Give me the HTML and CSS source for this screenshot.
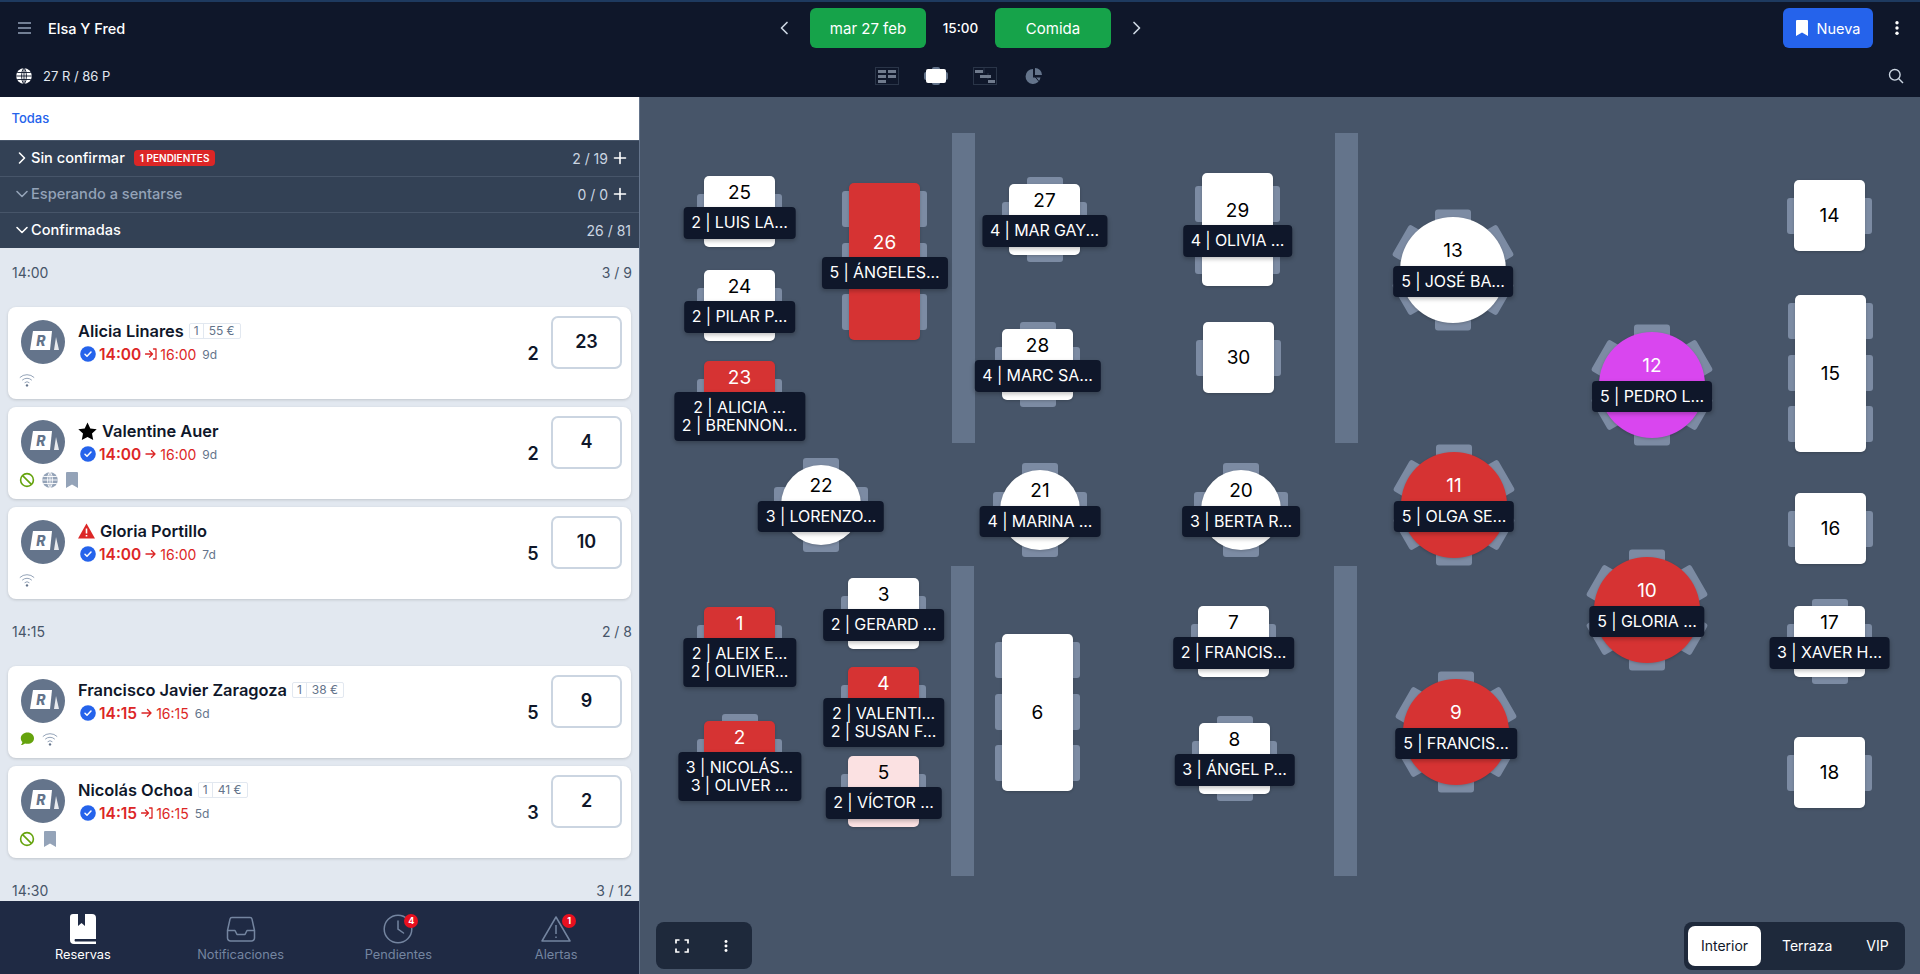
FILE: index.html
```html
<!DOCTYPE html>
<html lang="es">
<head>
  <meta charset="UTF-8" />
  <meta name="viewport" content="width=device-width, initial-scale=1.0" />
  <title>Elsa Y Fred - Reservas</title>
  <link rel="stylesheet" href="styles.css">
</head>
<body>

  <svg class="defs" width="0" height="0" aria-hidden="true">
    <symbol id="i-logo" viewBox="0 0 44 44">
      <circle cx="22" cy="22" r="22" fill="#64748b"/>
      <polygon points="12,11 31,11 29,30 9,30" fill="#fff"/>
      <polygon points="33,30 38,30 35,17" fill="#fff" opacity=".85"/>
    </symbol>
    <symbol id="i-check" viewBox="0 0 16 16">
      <circle cx="8" cy="8" r="7.8" fill="#2563eb"/>
      <path d="M5 8.2l2 2 4-4.2" fill="none" stroke="#fff" stroke-width="1.5" stroke-linecap="round" stroke-linejoin="round"/>
    </symbol>
    <symbol id="i-arrow" viewBox="0 0 12 12">
      <path d="M1 6h9M6.5 2.5L10 6l-3.5 3.5" fill="none" stroke="#dc2626" stroke-width="1.4" stroke-linecap="round" stroke-linejoin="round"/>
    </symbol>
    <symbol id="i-enter" viewBox="0 0 12 12">
      <path d="M0.5 6h6.5M4.5 3L7.5 6l-3 3M8.5 1h2.5v10H8.5" fill="none" stroke="#dc2626" stroke-width="1.3" stroke-linecap="round" stroke-linejoin="round"/>
    </symbol>
    <symbol id="i-wifi" viewBox="0 0 16 16">
      <path d="M.8 5.6a10.4 10.4 0 0 1 14.4 0M3.2 8.2a7 7 0 0 1 9.6 0M5.6 10.8a3.6 3.6 0 0 1 4.8 0" fill="none" stroke="#94a3b8" stroke-width="1"/>
      <circle cx="8" cy="13.4" r="1.2" fill="#64748b"/>
    </symbol>
    <symbol id="i-ban" viewBox="0 0 16 16">
      <circle cx="8" cy="8" r="6.4" fill="none" stroke="#65a30d" stroke-width="1.6"/>
      <path d="M3.6 3.6l8.8 8.8" stroke="#65a30d" stroke-width="1.6"/>
    </symbol>
    <symbol id="i-globe" viewBox="0 0 16 16">
      <circle cx="8" cy="8" r="7.8" fill="currentColor"/>
      <path d="M.2 8h15.600M1.200 4.500h13.600M1.200 11.500h13.600M8 .2v15.600M8 .2C4.800 2.500 4.800 13.500 8 15.800M8 .2c3.200 2.300 3.200 13.300 0 15.600" fill="none" stroke="var(--globe-line, #fff)" stroke-width=".9"/>
    </symbol>
    <symbol id="i-mark" viewBox="0 0 12 16">
      <path d="M1 0h10a1 1 0 0 1 1 1v15l-6-3.6L0 16V1a1 1 0 0 1 1-1z" fill="currentColor"/>
    </symbol>
    <symbol id="i-chev-down" viewBox="0 0 14 14">
      <path d="M2 4.5L7 9.5l5-5" fill="none" stroke="currentColor" stroke-width="1.6" stroke-linecap="round" stroke-linejoin="round"/>
    </symbol>
    <symbol id="i-plus" viewBox="0 0 14 14">
      <path d="M7 1.5v11M1.5 7h11" fill="none" stroke="currentColor" stroke-width="1.6" stroke-linecap="round"/>
    </symbol>
    <symbol id="i-dots" viewBox="0 0 16 16">
      <circle cx="8" cy="2.8" r="1.7" fill="currentColor"/>
      <circle cx="8" cy="8" r="1.7" fill="currentColor"/>
      <circle cx="8" cy="13.2" r="1.7" fill="currentColor"/>
    </symbol>
  </svg>

  <header class="topbar">
    <div class="bar-row bar-main">
      <div class="bar-left">
        <svg class="burger" width="13" height="12" viewBox="0 0 13 12"><path d="M0 1h13M0 6h13M0 11h13" stroke="#94a3b8" stroke-width="1.6"/></svg>
        <span class="venue">Elsa Y Fred</span>
      </div>
      <div class="bar-center">
        <svg class="nav-chev" width="10" height="14" viewBox="0 0 10 14"><path d="M8 1.5L2.5 7 8 12.5" fill="none" stroke="#cbd5e1" stroke-width="1.7" stroke-linecap="round" stroke-linejoin="round"/></svg>
        <button class="btn btn-green">mar 27 feb</button>
        <span class="hour">15:00</span>
        <button class="btn btn-green">Comida</button>
        <svg class="nav-chev" width="10" height="14" viewBox="0 0 10 14"><path d="M2 1.5L7.5 7 2 12.5" fill="none" stroke="#cbd5e1" stroke-width="1.7" stroke-linecap="round" stroke-linejoin="round"/></svg>
      </div>
      <div class="bar-right">
        <button class="btn btn-blue"><svg class="btn-mark" width="12" height="16"><use href="#i-mark"/></svg>Nueva</button>
        <svg class="bar-dots" width="16" height="16"><use href="#i-dots"/></svg>
      </div>
    </div>
    <div class="bar-row bar-sub">
      <div class="bar-left">
        <svg class="sub-globe" width="16" height="16"><use href="#i-globe"/></svg>
        <span class="totals">27 R / 86 P</span>
      </div>
      <div class="view-icons">
        <svg width="24" height="18" viewBox="0 0 24 18"><rect x=".5" y=".5" width="23" height="17" fill="none" stroke="#2a3548"/><path d="M3 3h8v3H3zM13 3h8v3h-8zM3 8h8v3H3zM13 8h8v3h-8zM3 13h8v3H3z" fill="#707b8d"/></svg>
        <svg width="24" height="18" viewBox="0 0 24 18"><rect y="5" width="24" height="8" rx="2" fill="#64748b"/><rect x="8" width="8" height="18" rx="2" fill="#64748b"/><rect x="2" y="2" width="20" height="14" rx="2" fill="#fff"/></svg>
        <svg width="24" height="18" viewBox="0 0 24 18"><rect x=".5" y=".5" width="23" height="17" fill="none" stroke="#2a3548"/><path d="M11 1v5M15 6v6" stroke="#2a3548"/><path d="M2 3h8v3H2zM7 8h11v3H7zM15 13h7v3h-7z" fill="#707b8d"/></svg>
        <svg width="18" height="18" viewBox="0 0 18 18"><path d="M8 2a7.5 7.5 0 1 0 7.5 8.5H8z" fill="#64748b"/><path d="M10 1a7 7 0 0 1 7 7h-7z" fill="#64748b"/><path d="M10 9.500h7M10 9.500l4 5" stroke="#0f172a"/></svg>
      </div>
      <div class="bar-right">
        <svg class="bar-search" width="16" height="16" viewBox="0 0 16 16"><circle cx="6.800" cy="6.800" r="5.300" fill="none" stroke="#cbd5e1" stroke-width="1.400"/><path d="M10.800 10.800l4.200 4.200" stroke="#cbd5e1" stroke-width="1.400"/></svg>
      </div>
    </div>
  </header>

  <div class="main">
    <aside class="sidebar">
      <div class="filter">Todas</div>

      <div class="section">
        <svg class="sec-chev right" width="14" height="14"><use href="#i-chev-down"/></svg>
        <span class="sec-name">Sin confirmar</span>
        <span class="pending">1 PENDIENTES</span>
        <span class="sec-count">2 / 19</span>
        <svg class="sec-plus" width="14" height="14"><use href="#i-plus"/></svg>
      </div>
      <div class="section muted">
        <svg class="sec-chev" width="14" height="14"><use href="#i-chev-down"/></svg>
        <span class="sec-name">Esperando a sentarse</span>
        <span class="sec-count">0 / 0</span>
        <svg class="sec-plus" width="14" height="14"><use href="#i-plus"/></svg>
      </div>
      <div class="section">
        <svg class="sec-chev" width="14" height="14"><use href="#i-chev-down"/></svg>
        <span class="sec-name">Confirmadas</span>
        <span class="sec-count">26 / 81</span>
      </div>

      <div class="list">
        <div class="slot"><span>14:00</span><span>3 / 9</span></div>

        <div class="card">
          <div class="card-top">
            <span class="avatar"><svg width="44" height="44"><use href="#i-logo"/></svg><span class="avatar-r">R</span></span>
            <div class="card-body">
              <div class="guest">Alicia Linares <span class="spend"><span>1</span><span>55 €</span></span></div>
              <div class="when">
                <svg width="16" height="16"><use href="#i-check"/></svg>
                <b>14:00</b>
                <svg class="arrow" width="12" height="12"><use href="#i-enter"/></svg>
                <span class="until">16:00</span><span class="age">9d</span>
              </div>
            </div>
            <span class="party">2</span>
            <span class="table-box">23</span>
          </div>
          <div class="card-icons"><svg width="16" height="16"><use href="#i-wifi"/></svg></div>
        </div>

        <div class="card">
          <div class="card-top">
            <span class="avatar"><svg width="44" height="44"><use href="#i-logo"/></svg><span class="avatar-r">R</span></span>
            <div class="card-body">
              <div class="guest">
                <svg class="star" width="19" height="18" viewBox="0 0 19 18"><path d="M9.500.5l2.800 5.900 6.400.8-4.700 4.400 1.200 6.400-5.700-3.100-5.700 3.100 1.200-6.400L.3 7.200l6.400-.8z" fill="#000"/></svg>
                Valentine Auer
              </div>
              <div class="when">
                <svg width="16" height="16"><use href="#i-check"/></svg>
                <b>14:00</b>
                <svg class="arrow" width="12" height="12"><use href="#i-arrow"/></svg>
                <span class="until">16:00</span><span class="age">9d</span>
              </div>
            </div>
            <span class="party">2</span>
            <span class="table-box">4</span>
          </div>
          <div class="card-icons">
            <svg width="16" height="16"><use href="#i-ban"/></svg>
            <svg class="ic-slate" width="16" height="16"><use href="#i-globe"/></svg>
            <svg class="ic-slate" width="16" height="16" viewBox="0 0 16 16"><use href="#i-mark" x="2" width="12" height="16"/></svg>
          </div>
        </div>

        <div class="card">
          <div class="card-top">
            <span class="avatar"><svg width="44" height="44"><use href="#i-logo"/></svg><span class="avatar-r">R</span></span>
            <div class="card-body">
              <div class="guest">
                <svg class="warn" width="17" height="16" viewBox="0 0 17 16"><path d="M8.500.5L17 15.500H0z" fill="#dc2626"/><path d="M8.500 5.500v5M8.500 12v1.500" stroke="#fff" stroke-width="1.600"/></svg>
                Gloria Portillo
              </div>
              <div class="when">
                <svg width="16" height="16"><use href="#i-check"/></svg>
                <b>14:00</b>
                <svg class="arrow" width="12" height="12"><use href="#i-arrow"/></svg>
                <span class="until">16:00</span><span class="age">7d</span>
              </div>
            </div>
            <span class="party">5</span>
            <span class="table-box">10</span>
          </div>
          <div class="card-icons"><svg width="16" height="16"><use href="#i-wifi"/></svg></div>
        </div>

        <div class="slot"><span>14:15</span><span>2 / 8</span></div>

        <div class="card">
          <div class="card-top">
            <span class="avatar"><svg width="44" height="44"><use href="#i-logo"/></svg><span class="avatar-r">R</span></span>
            <div class="card-body">
              <div class="guest">Francisco Javier Zaragoza <span class="spend"><span>1</span><span>38 €</span></span></div>
              <div class="when">
                <svg width="16" height="16"><use href="#i-check"/></svg>
                <b>14:15</b>
                <svg class="arrow" width="12" height="12"><use href="#i-arrow"/></svg>
                <span class="until">16:15</span><span class="age">6d</span>
              </div>
            </div>
            <span class="party">5</span>
            <span class="table-box">9</span>
          </div>
          <div class="card-icons">
            <svg width="16" height="16" viewBox="0 0 16 16"><path d="M8.500 1.500c3.800 0 6.500 2.500 6.500 5.700s-2.700 5.600-6.500 5.600c-.9 0-1.700-.1-2.500-.4-1 .9-2.400 1.500-4 1.600.8-.8 1.300-1.800 1.400-2.900C2.300 10 1.800 8.700 1.800 7.200c0-3.200 2.900-5.700 6.700-5.700z" fill="#65a30d"/></svg>
            <svg width="16" height="16"><use href="#i-wifi"/></svg>
          </div>
        </div>

        <div class="card">
          <div class="card-top">
            <span class="avatar"><svg width="44" height="44"><use href="#i-logo"/></svg><span class="avatar-r">R</span></span>
            <div class="card-body">
              <div class="guest">Nicolás Ochoa <span class="spend"><span>1</span><span>41 €</span></span></div>
              <div class="when">
                <svg width="16" height="16"><use href="#i-check"/></svg>
                <b>14:15</b>
                <svg class="arrow" width="12" height="12"><use href="#i-enter"/></svg>
                <span class="until">16:15</span><span class="age">5d</span>
              </div>
            </div>
            <span class="party">3</span>
            <span class="table-box">2</span>
          </div>
          <div class="card-icons">
            <svg width="16" height="16"><use href="#i-ban"/></svg>
            <svg class="ic-slate" width="16" height="16" viewBox="0 0 16 16"><use href="#i-mark" x="2" width="12" height="16"/></svg>
          </div>
        </div>

        <div class="slot"><span>14:30</span><span>3 / 12</span></div>
      </div>

      <nav class="tabbar">
        <div class="tab active">
          <svg width="28" height="30" viewBox="0 0 28 30"><path d="M4 0h5v12l3.500-3 3.500 3V0h7a4 4 0 0 1 4 4v21H6a2 2 0 0 0 0 2.500h21V30H5a4 4 0 0 1-4-4V3a3 3 0 0 1 3-3z" fill="#fff"/></svg>
          <span>Reservas</span>
        </div>
        <div class="tab">
          <svg width="30" height="26" viewBox="0 0 30 26"><path d="M6 1.500h18a2 2 0 0 1 2 1.600l2.500 11.400V22a3 3 0 0 1-3 3h-21a3 3 0 0 1-3-3v-7.500L4 3.100a2 2 0 0 1 2-1.600zM1.500 14.500H9l2 4h8l2-4h7.500" fill="none" stroke="#7485a0" stroke-width="1.500" stroke-linejoin="round"/></svg>
          <span>Notificaciones</span>
        </div>
        <div class="tab">
          <span class="tab-icon">
            <svg width="30" height="30" viewBox="0 0 30 30"><circle cx="15" cy="15" r="13.800" fill="none" stroke="#7485a0" stroke-width="1.500"/><path d="M15 7v8l5.500 4" fill="none" stroke="#7485a0" stroke-width="1.500" stroke-linecap="round"/></svg>
            <span class="tab-badge">4</span>
          </span>
          <span>Pendientes</span>
        </div>
        <div class="tab">
          <span class="tab-icon">
            <svg width="30" height="27" viewBox="0 0 30 27"><path d="M15 1.500L29 25.500H1z" fill="none" stroke="#7485a0" stroke-width="1.500" stroke-linejoin="round"/><path d="M15 9.500v9M15 21v1.500" stroke="#7485a0" stroke-width="1.500"/></svg>
            <span class="tab-badge">1</span>
          </span>
          <span>Alertas</span>
        </div>
      </nav>
    </aside>

    <section class="map">
      <div class="wall w-a"></div>
      <div class="wall w-b"></div>
      <div class="wall w-c"></div>
      <div class="wall w-d"></div>

      <div class="node sq t-25"><i class="chair l"></i><i class="chair r"></i><div class="top busy"><span class="num">25</span></div><div class="tag">2 | LUIS LA...</div></div>
      <div class="node sq t-24"><i class="chair l"></i><i class="chair r"></i><div class="top busy"><span class="num">24</span></div><div class="tag">2 | PILAR P...</div></div>
      <div class="node sq t-23"><i class="chair l"></i><i class="chair r"></i><div class="top busy red"><span class="num">23</span></div><div class="tag">2 | ALICIA ...<br>2 | BRENNON...</div></div>
      <div class="node tall t-26"><i class="chair l a"></i><i class="chair l b"></i><i class="chair l c"></i><i class="chair r a"></i><i class="chair r b"></i><i class="chair r c"></i><div class="top busy red"><span class="num">26</span></div><div class="tag">5 | ÁNGELES...</div></div>
      <div class="node sq t-27"><i class="chair u"></i><i class="chair d"></i><i class="chair l"></i><i class="chair r"></i><div class="top busy"><span class="num">27</span></div><div class="tag">4 | MAR GAY...</div></div>
      <div class="node sq t-28"><i class="chair u"></i><i class="chair d"></i><i class="chair l"></i><i class="chair r"></i><div class="top busy"><span class="num">28</span></div><div class="tag">4 | MARC SA...</div></div>
      <div class="node mid t-29"><i class="chair l a"></i><i class="chair l b"></i><i class="chair r a"></i><i class="chair r b"></i><div class="top busy"><span class="num">29</span></div><div class="tag">4 | OLIVIA ...</div></div>
      <div class="node sq t-30"><i class="chair l"></i><i class="chair r"></i><div class="top"><span class="num">30</span></div></div>

      <div class="node round t-13"><i class="seat s0"></i><i class="seat s1"></i><i class="seat s2"></i><i class="seat s3"></i><i class="seat s4"></i><i class="seat s5"></i><div class="top busy"><span class="num">13</span></div><div class="tag">5 | JOSÉ BA...</div></div>
      <div class="node round t-12"><i class="seat s0"></i><i class="seat s1"></i><i class="seat s2"></i><i class="seat s3"></i><i class="seat s4"></i><i class="seat s5"></i><div class="top busy pink"><span class="num">12</span></div><div class="tag">5 | PEDRO L...</div></div>
      <div class="node round t-11"><i class="seat s0"></i><i class="seat s1"></i><i class="seat s2"></i><i class="seat s3"></i><i class="seat s4"></i><i class="seat s5"></i><div class="top busy red"><span class="num">11</span></div><div class="tag">5 | OLGA SE...</div></div>
      <div class="node round t-10"><i class="seat s0"></i><i class="seat s1"></i><i class="seat s2"></i><i class="seat s3"></i><i class="seat s4"></i><i class="seat s5"></i><div class="top busy red"><span class="num">10</span></div><div class="tag">5 | GLORIA ...</div></div>
      <div class="node round t-9"><i class="seat s0"></i><i class="seat s1"></i><i class="seat s2"></i><i class="seat s3"></i><i class="seat s4"></i><i class="seat s5"></i><div class="top busy red"><span class="num">9</span></div><div class="tag">5 | FRANCIS...</div></div>

      <div class="node sq t-14"><i class="chair l"></i><i class="chair r"></i><div class="top"><span class="num">14</span></div></div>
      <div class="node tall t-15"><i class="chair l a"></i><i class="chair l b"></i><i class="chair l c"></i><i class="chair r a"></i><i class="chair r b"></i><i class="chair r c"></i><div class="top"><span class="num">15</span></div></div>
      <div class="node sq t-16"><i class="chair l"></i><i class="chair r"></i><div class="top"><span class="num">16</span></div></div>
      <div class="node sq t-17"><i class="chair u"></i><i class="chair d"></i><i class="chair l"></i><i class="chair r"></i><div class="top busy"><span class="num">17</span></div><div class="tag">3 | XAVER H...</div></div>
      <div class="node sq t-18"><i class="chair l"></i><i class="chair r"></i><div class="top"><span class="num">18</span></div></div>

      <div class="node small t-22"><i class="chair u"></i><i class="chair d"></i><i class="chair l"></i><i class="chair r"></i><div class="top busy"><span class="num">22</span></div><div class="tag">3 | LORENZO...</div></div>
      <div class="node small t-21"><i class="chair u"></i><i class="chair d"></i><i class="chair l"></i><i class="chair r"></i><div class="top busy"><span class="num">21</span></div><div class="tag">4 | MARINA ...</div></div>
      <div class="node small t-20"><i class="chair u"></i><i class="chair d"></i><i class="chair l"></i><i class="chair r"></i><div class="top busy"><span class="num">20</span></div><div class="tag">3 | BERTA R...</div></div>

      <div class="node sq t-1"><i class="chair l"></i><i class="chair r"></i><div class="top busy red"><span class="num">1</span></div><div class="tag">2 | ALEIX E...<br>2 | OLIVIER...</div></div>
      <div class="node sq t-2"><i class="chair u"></i><i class="chair l"></i><i class="chair r"></i><div class="top busy red"><span class="num">2</span></div><div class="tag">3 | NICOLÁS...<br>3 | OLIVER ...</div></div>
      <div class="node sq t-3"><i class="chair l"></i><i class="chair r"></i><div class="top busy"><span class="num">3</span></div><div class="tag">2 | GERARD ...</div></div>
      <div class="node sq t-4"><i class="chair l"></i><i class="chair r"></i><div class="top busy red"><span class="num">4</span></div><div class="tag">2 | VALENTI...<br>2 | SUSAN F...</div></div>
      <div class="node sq t-5"><i class="chair l"></i><i class="chair r"></i><div class="top busy blush"><span class="num">5</span></div><div class="tag">2 | VÍCTOR ...</div></div>
      <div class="node tall t-6"><i class="chair l a"></i><i class="chair l b"></i><i class="chair l c"></i><i class="chair r a"></i><i class="chair r b"></i><i class="chair r c"></i><div class="top"><span class="num">6</span></div></div>
      <div class="node sq t-7"><i class="chair l"></i><i class="chair r"></i><div class="top busy"><span class="num">7</span></div><div class="tag">2 | FRANCIS...</div></div>
      <div class="node sq t-8"><i class="chair u"></i><i class="chair d"></i><i class="chair l"></i><i class="chair r"></i><div class="top busy"><span class="num">8</span></div><div class="tag">3 | ÁNGEL P...</div></div>

      <div class="map-tools">
        <svg width="14" height="14" viewBox="0 0 14 14"><path d="M1 4.500V1h3.500M9.500 1H13v3.500M13 9.500V13H9.500M4.500 13H1V9.500" fill="none" stroke="#fff" stroke-width="1.700"/></svg>
        <svg width="14" height="14" viewBox="0 0 16 16"><use href="#i-dots"/></svg>
      </div>

      <div class="zones">
        <span class="zone on">Interior</span>
        <span class="zone">Terraza</span>
        <span class="zone">VIP</span>
      </div>
    </section>
  </div>

</body>
</html>
```

FILE: styles.css
```css
* {
  box-sizing: border-box;
}

body {
  font-family: Inter, "Noto Sans", sans-serif;
  margin: 0;
  height: 100vh;
  display: flex;
  flex-direction: column;
  overflow: hidden;
  background-color: #0f172a;
}

.defs {
  position: absolute;
}

/* top bar */
.topbar {
  background-color: #0f172a;
  border-top: 2px solid #1e3a5f;
  height: 97px;
  color: #fff;
  flex-shrink: 0;
}

.bar-row {
  display: grid;
  grid-template-columns: 1fr auto 1fr;
  align-items: center;
}

.bar-main {
  height: 52px;
}

.bar-sub {
  height: 43px;
}

.bar-left {
  display: flex;
  align-items: center;
  padding-left: 18px;
}

.bar-center {
  display: flex;
  align-items: center;
}

.bar-right {
  display: flex;
  align-items: center;
  justify-content: flex-end;
  padding-right: 15px;
}

.venue {
  font-size: 14.5px;
  font-weight: 500;
  margin-left: 17px;
}

.nav-chev {
  margin: 0 8px;
}

.bar-center .nav-chev:first-child {
  margin-right: 21.5px;
}

.bar-center .nav-chev:last-child {
  margin-left: 20.5px;
}

.btn {
  font-family: inherit;
  border: none;
  color: #fff;
  height: 40px;
  font-size: 15px;
  border-radius: 6px;
  cursor: pointer;
}

.btn-green {
  background-color: #16a34a;
  width: 116px;
}

.btn-blue {
  background-color: #2563eb;
  width: 90px;
  font-size: 14.5px;
  display: flex;
  align-items: center;
  justify-content: center;
  gap: 9px;
}

.btn-mark {
  color: #fff;
}

.hour {
  width: 69px;
  text-align: center;
  font-size: 13.5px;
  font-weight: 500;
}

.bar-dots {
  color: #fff;
  margin-left: 16px;
}

.sub-globe {
  color: #fff;
  --globe-line: #0f172a;
  margin-left: -2px;
}

.totals {
  font-size: 13px;
  margin-left: 11px;
  color: #e2e8f0;
}

.view-icons {
  display: flex;
  align-items: center;
  gap: 25px;
}

.view-icons svg:last-child {
  margin: 0 2.5px;
}

.bar-search {
  margin-right: 1px;
}

/* layout */
.main {
  flex: 1;
  display: flex;
  min-height: 0;
}

.sidebar {
  width: 640px;
  flex-shrink: 0;
  display: flex;
  flex-direction: column;
  border-right: 1px solid #64748b;
  background-color: #e2e8f0;
}

.filter {
  background-color: #fff;
  height: 43px;
  padding-left: 11.5px;
  line-height: 43px;
  font-size: 13px;
  font-weight: 500;
  color: #2563eb;
  flex-shrink: 0;
}

.section {
  height: 36px;
  flex-shrink: 0;
  display: flex;
  align-items: center;
  background-color: #334155;
  border-top: 1px solid #475569;
  color: #fff;
  padding: 0 8px 1px 15px;
}

.section.muted {
  color: #94a3b8;
}

.sec-chev {
  margin-right: 2px;
}

.sec-chev.right {
  transform: rotate(-90deg);
}

.sec-name {
  font-size: 14.6px;
  font-weight: 500;
}

.pending {
  background-color: #dc2626;
  font-size: 10px;
  font-weight: 600;
  border-radius: 4px;
  padding: 2px 6px;
  line-height: 12px;
  margin-left: 9px;
}

.sec-count {
  margin-left: auto;
  font-size: 14px;
  color: #cbd5e1;
}

.sec-plus {
  color: #fff;
  margin: 0 4px 0 5px;
}

/* reservation list */
.list {
  flex: 1;
  overflow: hidden;
  min-height: 0;
}

.slot {
  height: 59px;
  display: flex;
  justify-content: space-between;
  padding: 16px 7px 0 12px;
  font-size: 14px;
  line-height: 18px;
  color: #475569;
}

.card {
  background-color: #fff;
  height: 92px;
  margin: 0 8px 8px 8px;
  border-radius: 8px;
  box-shadow: 0 1px 3px rgba(0, 0, 0, 0.15);
  padding: 9px 9px 0 13px;
}

.card-top {
  display: flex;
  align-items: flex-start;
}

.avatar {
  position: relative;
  display: block;
  width: 44px;
  height: 44px;
  margin-top: 4px;
  margin-right: 13px;
  flex-shrink: 0;
}

.avatar svg {
  display: block;
}

.avatar-r {
  position: absolute;
  left: 10px;
  top: 11px;
  width: 20px;
  text-align: center;
  font-size: 14px;
  line-height: 20px;
  font-weight: 800;
  font-style: italic;
  color: #64748b;
}

.card-body {
  flex: 1;
  margin-top: 5px;
}

.guest {
  display: flex;
  align-items: center;
  gap: 5px;
  height: 20px;
  font-size: 16.4px;
  font-weight: 600;
  color: #0f172a;
  white-space: nowrap;
}

.spend {
  display: inline-flex;
  height: 16px;
  border: 1px solid #e2e8f0;
  border-radius: 2px;
  font-size: 12px;
  font-weight: 400;
  color: #64748b;
  line-height: 14px;
}

.spend span {
  padding: 0 4px;
}

.spend span + span {
  padding: 0 5px;
  border-left: 1px solid #e2e8f0;
}

.when {
  display: flex;
  align-items: center;
  height: 20px;
  margin-top: 3px;
  margin-left: 2px;
  color: #dc2626;
  font-size: 14px;
}

.when b {
  font-size: 15.5px;
  font-weight: 600;
  margin-left: 3px;
}

.arrow {
  margin: 0 3px 0 4px;
}

.age {
  font-size: 12px;
  color: #64748b;
  margin-left: 6px;
}

.party {
  width: 20px;
  text-align: center;
  font-size: 18px;
  font-weight: 600;
  line-height: 20px;
  margin-top: 28px;
  margin-right: 8px;
  color: #0f172a;
}

.table-box {
  width: 71px;
  height: 53px;
  border: 2px solid #cbd5e1;
  border-radius: 7px;
  display: flex;
  align-items: center;
  justify-content: center;
  font-size: 18px;
  font-weight: 600;
  color: #0f172a;
  padding-bottom: 2px;
}

.card-icons {
  display: flex;
  gap: 6.5px;
  margin: 3px 0 0 -2px;
}

.ic-slate {
  color: #94a3b8;
}

/* bottom tabs */
.tabbar {
  height: 73px;
  flex-shrink: 0;
  display: grid;
  grid-template-columns: repeat(4, 1fr);
  padding: 0 4px;
  background-color: #1f2a44;
}

.tab {
  display: flex;
  flex-direction: column;
  align-items: center;
  height: 100%;
  font-size: 12.8px;
  color: #7485a0;
}

.tab svg {
  display: block;
  margin-top: 13px;
  height: 30px;
  flex-shrink: 0;
}

.tab > span:last-child {
  margin-top: 3px;
}

.tab.active {
  color: #fff;
}

.tab-icon {
  position: relative;
  display: block;
}

.tab-badge {
  position: absolute;
  top: 13px;
  right: -5px;
  width: 14px;
  height: 14px;
  border-radius: 50%;
  background-color: #e8101f;
  color: #fff;
  font-size: 9px;
  font-weight: 700;
  line-height: 14px;
  text-align: center;
}

/* floor plan */
.map {
  flex: 1;
  position: relative;
  overflow: hidden;
  background-color: #475569;
}

.wall {
  position: absolute;
  width: 23px;
  height: 310px;
  background-color: #64748b;
}

.w-a { left: 312px; top: 36px; }
.w-b { left: 695px; top: 36px; }
.w-c { left: 311px; top: 469px; }
.w-d { left: 694px; top: 469px; }

.node {
  position: absolute;
}

.sq { width: 71px; height: 71px; }
.tall { width: 71px; height: 157px; }
.mid { width: 71px; height: 113px; }
.round { width: 106px; height: 106px; }
.small { width: 80px; height: 80px; }

.top {
  position: absolute;
  inset: 0;
  background-color: #fff;
  border-radius: 5px;
  color: #000;
  box-shadow: 0 1px 3px rgba(0, 0, 0, 0.2);
  display: flex;
  align-items: center;
  justify-content: center;
}

.round .top,
.small .top {
  border-radius: 50%;
}

.top.red {
  background-color: #d63333;
  color: #fff;
}

.top.pink {
  background-color: #d946ef;
  color: #fff;
}

.top.blush {
  background-color: #fbe1e2;
}

.num {
  font-size: 19px;
  line-height: 24px;
}

.busy .num {
  transform: translateY(-19.5px);
}

.tag {
  position: absolute;
  top: calc(50% - 4.5px);
  left: 50%;
  transform: translateX(-50%);
  z-index: 5;
  background-color: #0f172a;
  color: #fff;
  font-size: 16px;
  letter-spacing: -0.1px;
  line-height: 17.5px;
  padding: 7px 8px;
  border-radius: 4px;
  text-align: center;
  white-space: nowrap;
  box-shadow: 0 2px 4px rgba(0, 0, 0, 0.25);
}

.chair,
.seat {
  position: absolute;
  background-color: #7c8ba3;
  border-radius: 3px;
}

.chair.l,
.chair.r {
  width: 14px;
  height: 36px;
  top: calc(50% - 18px);
}

.chair.l { left: -7px; }
.chair.r { right: -7px; }

.chair.u,
.chair.d {
  width: 36px;
  height: 14px;
  left: calc(50% - 18px);
}

.chair.u { top: -7px; }
.chair.d { bottom: -7px; }

.tall .chair.a { top: 8px; }
.tall .chair.b { top: 60px; }
.tall .chair.c { top: 111px; }
.mid .chair.a { top: 13px; }
.mid .chair.b { top: 65px; }

.seat {
  width: 36px;
  height: 14px;
  left: calc(50% - 18px);
  top: calc(50% - 7px);
}

.s0 { transform: rotate(0deg) translateY(-53.5px); }
.s1 { transform: rotate(60deg) translateY(-53.5px); }
.s2 { transform: rotate(120deg) translateY(-53.5px); }
.s3 { transform: rotate(180deg) translateY(-53.5px); }
.s4 { transform: rotate(240deg) translateY(-53.5px); }
.s5 { transform: rotate(300deg) translateY(-53.5px); }

.t-1 { left: 64px; top: 510px; }
.t-2 { left: 64px; top: 624px; }
.t-3 { left: 208px; top: 481px; }
.t-4 { left: 208px; top: 570px; }
.t-5 { left: 208px; top: 659px; }
.t-6 { left: 362px; top: 537px; }
.t-7 { left: 558px; top: 509px; }
.t-8 { left: 559px; top: 626px; }
.t-9 { left: 763px; top: 582px; }
.t-10 { left: 954px; top: 460px; }
.t-11 { left: 761px; top: 355px; }
.t-12 { left: 959px; top: 235px; }
.t-13 { left: 760px; top: 120px; }
.t-14 { left: 1154px; top: 83px; }
.t-15 { left: 1155px; top: 198px; }
.t-16 { left: 1155px; top: 396px; }
.t-17 { left: 1154px; top: 509px; }
.t-18 { left: 1154px; top: 640px; }
.t-20 { left: 561px; top: 373px; }
.t-21 { left: 360px; top: 373px; }
.t-22 { left: 141px; top: 368px; }
.t-23 { left: 64px; top: 264px; }
.t-24 { left: 64px; top: 173px; }
.t-25 { left: 64px; top: 79px; }
.t-26 { left: 209px; top: 86px; }
.t-27 { left: 369px; top: 87px; }
.t-28 { left: 362px; top: 232px; }
.t-29 { left: 562px; top: 76px; }
.t-30 { left: 563px; top: 225px; }

/* map controls */
.map-tools {
  position: absolute;
  left: 16px;
  bottom: 5px;
  width: 96px;
  height: 47px;
  background-color: #1e293b;
  border-radius: 8px;
  display: flex;
  align-items: center;
  color: #fff;
  padding-left: 19px;
  gap: 30px;
}

.zones {
  position: absolute;
  right: 15px;
  bottom: 4px;
  height: 48px;
  width: 221px;
  background-color: #1e293b;
  border-radius: 8px;
  display: flex;
  align-items: center;
  padding: 4px;
  font-size: 14px;
  color: #fff;
}

.zone {
  padding: 0 21px;
  line-height: 40px;
}

.zone.on {
  background-color: #fff;
  color: #0f172a;
  border-radius: 7px;
  padding: 0 12px;
  width: 73px;
  text-align: center;
}

.zone:last-child {
  padding: 0 0 0 13px;
}
```
